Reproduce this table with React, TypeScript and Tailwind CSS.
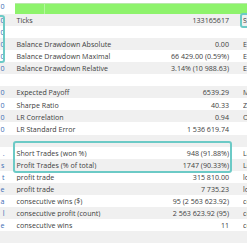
import React from "react";

type Row = { lf?: string; l?: string; v?: string; r?: string };

const rows: Row[] = [
  { lf: "0", l: "Ticks", v: "133165617", r: "Symbols" },
  { lf: "0", l: "", v: "", r: "" },
  { lf: "0", l: "Balance Drawdown Absolute", v: "0.00", r: "Equity" },
  { lf: "0", l: "Balance Drawdown Maximal", v: "66 429.00 (0.59%)", r: "Equity" },
  { lf: "0", l: "Balance Drawdown Relative", v: "3.14% (10 988.63)", r: "Equity" },
  { lf: "", l: "", v: "", r: "" },
  { lf: "0", l: "Expected Payoff", v: "6539.29", r: "Margin" },
  { lf: "0", l: "Sharpe Ratio", v: "40.33", r: "Z-Score" },
  { lf: "0", l: "LR Correlation", v: "0.94", r: "OnTester" },
  { lf: "0", l: "LR Standard Error", v: "1 536 619.74", r: "" },
  { lf: "", l: "", v: "", r: "" },
  { lf: ".", l: "Short Trades (won %)", v: "948 (91.88%)", r: "Long" },
  { lf: "s", l: "Profit Trades (% of total)", v: "1747 (90.33%)", r: "Loss" },
  { lf: "t", l: "profit trade", v: "315 810.00", r: "loss" },
  { lf: "e", l: "profit trade", v: "7 735.23", r: "loss" },
  { lf: "a", l: "consecutive wins ($)", v: "95 (2 563 623.92)", r: "consecutive" },
  { lf: "l", l: "consecutive profit (count)", v: "2 563 623.92 (95)", r: "consecutive" },
  { lf: "e", l: "consecutive wins", v: "11", r: "consecutive" },
  { lf: "", l: "", v: "", r: "" },
];

export default function App() {
  return (
    <div className="relative w-[247px] h-[247px] overflow-hidden bg-white font-['Open_Sans',sans-serif] text-[7.1px] leading-none text-[#404040]">
      {/* top green row */}
      <div className="flex h-[13.6px] bg-white">
        <div className="w-[15px] shrink-0 flex pt-[3px]">
          <div className="w-[4.5px] overflow-hidden whitespace-nowrap flex justify-end text-[#3d6db5]">
            <span>0</span>
          </div>
        </div>
        <div className="flex-1 mt-[3px] flex bg-[#8ef36c] border-t border-[#b8e8a8]">
          <div className="w-[30px] border-r border-[#b5f5a0]" />
          <div className="flex-1" />
        </div>
      </div>
      {rows.map((r, i) => (
        <div
          key={i}
          className={`flex items-center h-[12.1px] pt-[1.5px] ${i % 2 === 0 ? "bg-[#f0f0f0]" : "bg-white"}`}
        >
          <div className="w-[15px] shrink-0">
            <div className="w-[4.5px] overflow-hidden whitespace-nowrap flex justify-end text-[#3d6db5]">
              <span>{r.lf}</span>
            </div>
          </div>
          <div className="flex-1 pl-[1.5px] whitespace-nowrap overflow-hidden">{r.l}</div>
          <div className="shrink-0 text-right whitespace-nowrap">{r.v}</div>
          <div className="w-[14px] shrink-0" />
          <div className="w-[4px] shrink-0 overflow-hidden whitespace-nowrap">{r.r}</div>
        </div>
      ))}
      {/* highlight boxes */}
      <div className="absolute left-[-4px] top-[15px] w-[9px] h-[48px] rounded-[3px] border-2 border-[#6ccac6]" />
      <div className="absolute left-[240px] top-[13px] w-[14px] h-[15px] rounded-[3px] border-2 border-[#6ccac6]" />
      <div className="absolute left-[13px] top-[141px] w-[219px] h-[32px] rounded-[3px] border-2 border-[#6ccac6]" />
    </div>
  );
}
